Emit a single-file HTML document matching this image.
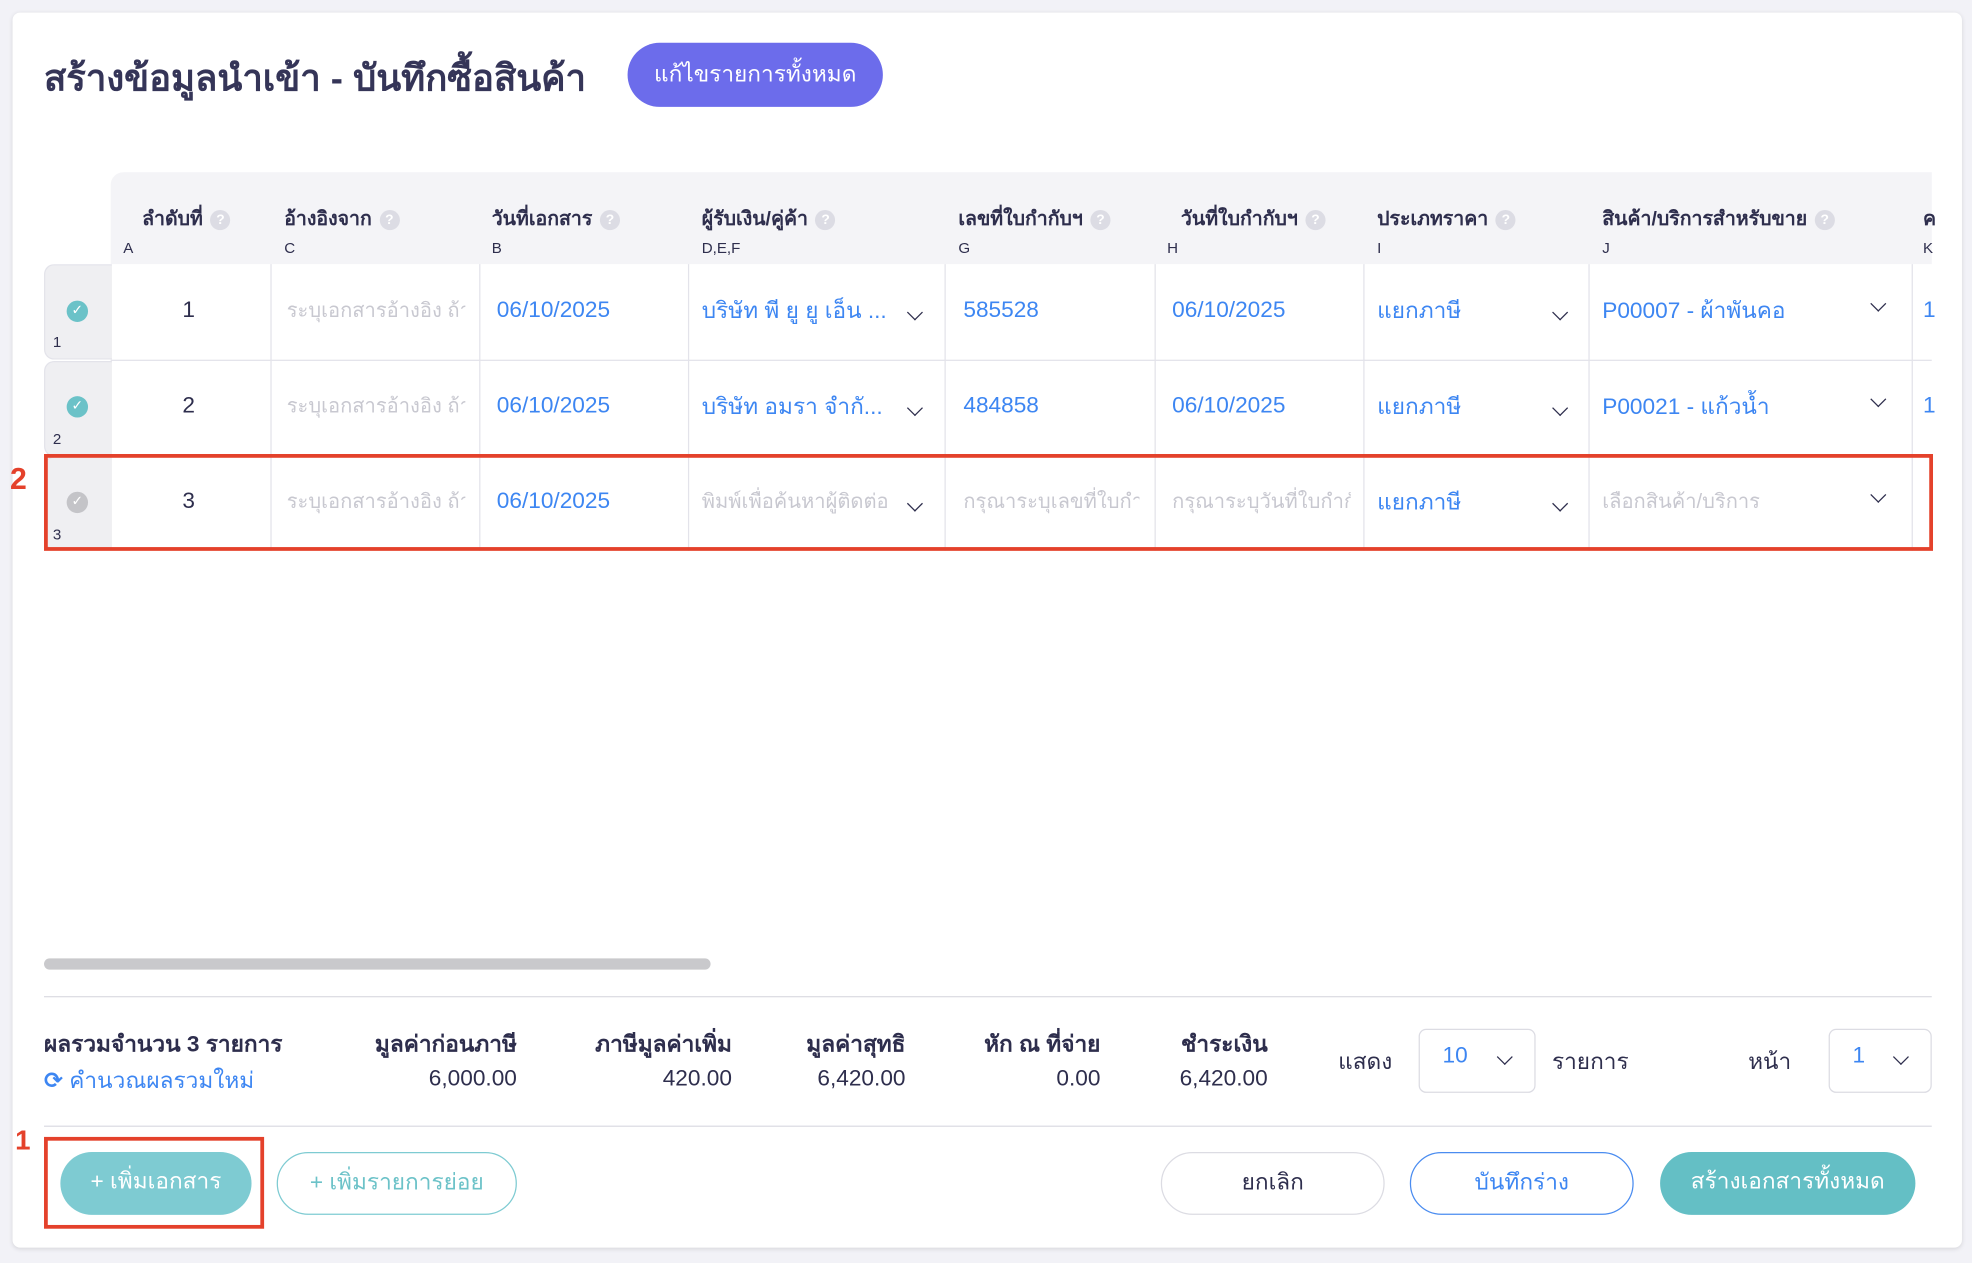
<!DOCTYPE html>
<html><head><meta charset="utf-8"><style>
*{box-sizing:border-box;margin:0;padding:0}
html,body{width:1972px;height:1262px;overflow:hidden;background:#f2f2f7}
body{font-family:"Liberation Sans","DejaVu Sans",sans-serif;color:#2e2e4d}
#s{position:absolute;left:0;top:0;width:1568px;height:1004px;transform:scale(1.25765);transform-origin:0 0}
.a{position:absolute;white-space:nowrap}
.card{left:10px;top:10px;width:1550px;height:982px;background:#fff;border-radius:6px;box-shadow:0 1px 4px rgba(0,0,0,.12)}
.hd{font-size:15.5px;font-weight:bold;color:#2e2e4d}
.q{display:inline-block;width:16px;height:16px;border-radius:50%;background:#dcdce4;color:#fff;font-size:11px;text-align:center;line-height:16px;vertical-align:1px;margin-left:6px}
.lt{font-size:12px;color:#2e2e4d}
.cell{font-size:18px}
.bl{color:#3d86f2}
.ph{color:#c8c8d0;font-size:16px;overflow:hidden;}
.vl{position:absolute;width:1px;background:#e3e3ea}
.chev{position:absolute;width:9px;height:9px;border-right:1.6px solid #2e2e4d;border-bottom:1.6px solid #2e2e4d;transform:rotate(45deg)}
.rn{position:absolute;left:35px;width:54px;background:#efeff2;border:1px solid #e3e3ea;border-right:none;border-radius:8px 0 0 8px}
.ck{position:absolute;left:17px;width:17px;height:17px;border-radius:50%;background:#6bc2c8;color:#fff;font-size:11px;text-align:center;line-height:17px;font-weight:bold}
.btn{position:absolute;top:916px;height:50px;border-radius:25px;font-size:18px;text-align:center;line-height:48px}
.sum{font-size:18px;text-align:right}
</style></head><body><div id="s">
<div class="a card"></div>
<div class="a" style="left:35px;top:39px;font-size:29px;font-weight:bold;color:#353558">สร้างข้อมูลนำเข้า - บันทึกซื้อสินค้า</div>
<div class="a" style="left:499px;top:34px;width:203px;height:51px;border-radius:26px;background:#6c6ceb;color:#fff;font-size:18px;text-align:center;line-height:50px">แก้ไขรายการทั้งหมด</div>

<div class="a" style="left:88px;top:137px;width:1448px;height:73px;background:#f4f4f7;border-radius:10px 0 0 0"></div>
<div class="a hd" style="left:113px;top:161px">ลำดับที่<span class="q">?</span></div><div class="a lt" style="left:98px;top:190px">A</div>
<div class="a hd" style="left:226px;top:161px">อ้างอิงจาก<span class="q">?</span></div><div class="a lt" style="left:226px;top:190px">C</div>
<div class="a hd" style="left:391px;top:161px">วันที่เอกสาร<span class="q">?</span></div><div class="a lt" style="left:391px;top:190px">B</div>
<div class="a hd" style="left:558px;top:161px">ผู้รับเงิน/คู่ค้า<span class="q">?</span></div><div class="a lt" style="left:558px;top:190px">D,E,F</div>
<div class="a hd" style="left:762px;top:161px">เลขที่ใบกำกับฯ<span class="q">?</span></div><div class="a lt" style="left:762px;top:190px">G</div>
<div class="a hd" style="left:939px;top:161px">วันที่ใบกำกับฯ<span class="q">?</span></div><div class="a lt" style="left:928px;top:190px">H</div>
<div class="a hd" style="left:1095px;top:161px">ประเภทราคา<span class="q">?</span></div><div class="a lt" style="left:1095px;top:190px">I</div>
<div class="a hd" style="left:1274px;top:161px">สินค้า/บริการสำหรับขาย<span class="q">?</span></div><div class="a lt" style="left:1274px;top:190px">J</div>
<div class="a hd" style="left:1529px;top:161px">ค</div><div class="a lt" style="left:1529px;top:190px">K</div>

<div class="rn" style="top:210px;height:76px"><div class="ck" style="top:28px">✓</div><div class="a lt" style="left:6px;top:54px">1</div></div>
<div class="rn" style="top:287px;height:76px"><div class="ck" style="top:27px">✓</div><div class="a lt" style="left:6px;top:54px">2</div></div>
<div class="rn" style="top:363px;height:74px"><div class="ck" style="top:27px;background:#c4c4c8">✓</div><div class="a lt" style="left:6px;top:54px">3</div></div>

<div class="a" style="left:88px;top:286px;width:1448px;height:1px;background:#e3e3ea"></div>
<div class="a" style="left:88px;top:362px;width:1448px;height:1px;background:#e3e3ea"></div>
<div class="vl" style="left:215px;top:210px;height:228px"></div>
<div class="vl" style="left:381px;top:210px;height:228px"></div>
<div class="vl" style="left:547px;top:210px;height:228px"></div>
<div class="vl" style="left:751px;top:210px;height:228px"></div>
<div class="vl" style="left:918px;top:210px;height:228px"></div>
<div class="vl" style="left:1084px;top:210px;height:228px"></div>
<div class="vl" style="left:1263px;top:210px;height:228px"></div>
<div class="vl" style="left:1520px;top:210px;height:228px"></div>

<!-- row 1 -->
<div class="a cell" style="left:145px;top:236px">1</div>
<div class="a ph" style="left:228px;top:235px;width:142px">ระบุเอกสารอ้างอิง ถ้ามี</div>
<div class="a cell bl" style="left:395px;top:236px">06/10/2025</div>
<div class="a cell bl" style="left:558px;top:232px">บริษัท พี ยู ยู เอ็น ...</div><div class="chev" style="left:723px;top:244px"></div>
<div class="a cell bl" style="left:766px;top:236px">585528</div>
<div class="a cell bl" style="left:932px;top:236px">06/10/2025</div>
<div class="a cell bl" style="left:1095px;top:232px">แยกภาษี</div><div class="chev" style="left:1236px;top:244px"></div>
<div class="a cell bl" style="left:1274px;top:232px">P00007 - ผ้าพันคอ</div><div class="chev" style="left:1489px;top:237px"></div>
<div class="a cell bl" style="left:1529px;top:236px">1</div>
<!-- row 2 -->
<div class="a cell" style="left:145px;top:312px">2</div>
<div class="a ph" style="left:228px;top:311px;width:142px">ระบุเอกสารอ้างอิง ถ้ามี</div>
<div class="a cell bl" style="left:395px;top:312px">06/10/2025</div>
<div class="a cell bl" style="left:558px;top:308px">บริษัท อมรา จำกั...</div><div class="chev" style="left:723px;top:320px"></div>
<div class="a cell bl" style="left:766px;top:312px">484858</div>
<div class="a cell bl" style="left:932px;top:312px">06/10/2025</div>
<div class="a cell bl" style="left:1095px;top:308px">แยกภาษี</div><div class="chev" style="left:1236px;top:320px"></div>
<div class="a cell bl" style="left:1274px;top:308px">P00021 - แก้วน้ำ</div><div class="chev" style="left:1489px;top:313px"></div>
<div class="a cell bl" style="left:1529px;top:312px">1</div>
<!-- row 3 -->
<div class="a cell" style="left:145px;top:388px">3</div>
<div class="a ph" style="left:228px;top:387px;width:142px">ระบุเอกสารอ้างอิง ถ้ามี</div>
<div class="a cell bl" style="left:395px;top:388px">06/10/2025</div>
<div class="a ph" style="left:558px;top:387px;width:158px">พิมพ์เพื่อค้นหาผู้ติดต่อ</div><div class="chev" style="left:723px;top:396px"></div>
<div class="a ph" style="left:766px;top:387px;width:140px">กรุณาระบุเลขที่ใบกำกับ</div>
<div class="a ph" style="left:932px;top:387px;width:142px">กรุณาระบุวันที่ใบกำกับ</div>
<div class="a cell bl" style="left:1095px;top:384px">แยกภาษี</div><div class="chev" style="left:1236px;top:396px"></div>
<div class="a ph" style="left:1274px;top:387px">เลือกสินค้า/บริการ</div><div class="chev" style="left:1489px;top:389px"></div>

<div class="a" style="left:35px;top:361px;width:1502px;height:77px;border:3px solid #e4412b"></div>
<div class="a" style="left:8px;top:368px;font-size:24px;font-weight:bold;color:#e4412b">2</div>

<div class="a" style="left:35px;top:762px;width:530px;height:9px;border-radius:5px;background:#c9c9cc"></div>
<div class="a" style="left:35px;top:792px;width:1501px;height:1px;background:#dcdce3"></div>

<div class="a" style="left:35px;top:815px;font-size:18px;font-weight:bold">ผลรวมจำนวน 3 รายการ</div>
<div class="a bl" style="left:35px;top:844px;font-size:18px"><span style="font-weight:bold">⟳</span> คำนวณผลรวมใหม่</div>
<div class="a sum" style="right:1157px;top:815px;font-weight:bold">มูลค่าก่อนภาษี</div><div class="a sum" style="right:1157px;top:847px">6,000.00</div>
<div class="a sum" style="right:986px;top:815px;font-weight:bold">ภาษีมูลค่าเพิ่ม</div><div class="a sum" style="right:986px;top:847px">420.00</div>
<div class="a sum" style="right:848px;top:815px;font-weight:bold">มูลค่าสุทธิ</div><div class="a sum" style="right:848px;top:847px">6,420.00</div>
<div class="a sum" style="right:693px;top:815px;font-weight:bold">หัก ณ ที่จ่าย</div><div class="a sum" style="right:693px;top:847px">0.00</div>
<div class="a sum" style="right:560px;top:815px;font-weight:bold">ชำระเงิน</div><div class="a sum" style="right:560px;top:847px">6,420.00</div>
<div class="a" style="left:1064px;top:829px;font-size:18px">แสดง</div>
<div class="a" style="left:1128px;top:818px;width:93px;height:51px;border:1px solid #dcdce3;border-radius:6px"></div>
<div class="a bl" style="left:1147px;top:829px;font-size:18px">10</div><div class="chev" style="left:1192px;top:836px"></div>
<div class="a" style="left:1234px;top:829px;font-size:18px">รายการ</div>
<div class="a" style="left:1390px;top:829px;font-size:18px">หน้า</div>
<div class="a" style="left:1454px;top:818px;width:82px;height:51px;border:1px solid #dcdce3;border-radius:6px"></div>
<div class="a bl" style="left:1473px;top:829px;font-size:18px">1</div><div class="chev" style="left:1507px;top:836px"></div>

<div class="a" style="left:35px;top:895px;width:1501px;height:1px;background:#dcdce3"></div>

<div class="btn" style="left:48px;width:152px;background:#7ecbd2;color:#fff;line-height:46px">+ เพิ่มเอกสาร</div>
<div class="btn" style="left:220px;width:191px;border:1px solid #7ecbd2;color:#6cc2c8;line-height:46px">+ เพิ่มรายการย่อย</div>
<div class="btn" style="left:923px;width:178px;border:1px solid #dcdce3;color:#2e2e4d;line-height:46px">ยกเลิก</div>
<div class="btn" style="left:1121px;width:178px;border:1px solid #4a8cf0;color:#3d86f2;line-height:46px">บันทึกร่าง</div>
<div class="btn" style="left:1320px;width:203px;background:#64bfc5;color:#fff;line-height:46px">สร้างเอกสารทั้งหมด</div>
<div class="a" style="left:35px;top:904px;width:175px;height:73px;border:3px solid #e4412b"></div>
<div class="a" style="left:12px;top:894px;font-size:22px;font-weight:bold;color:#e4412b">1</div>
</div></body></html>
